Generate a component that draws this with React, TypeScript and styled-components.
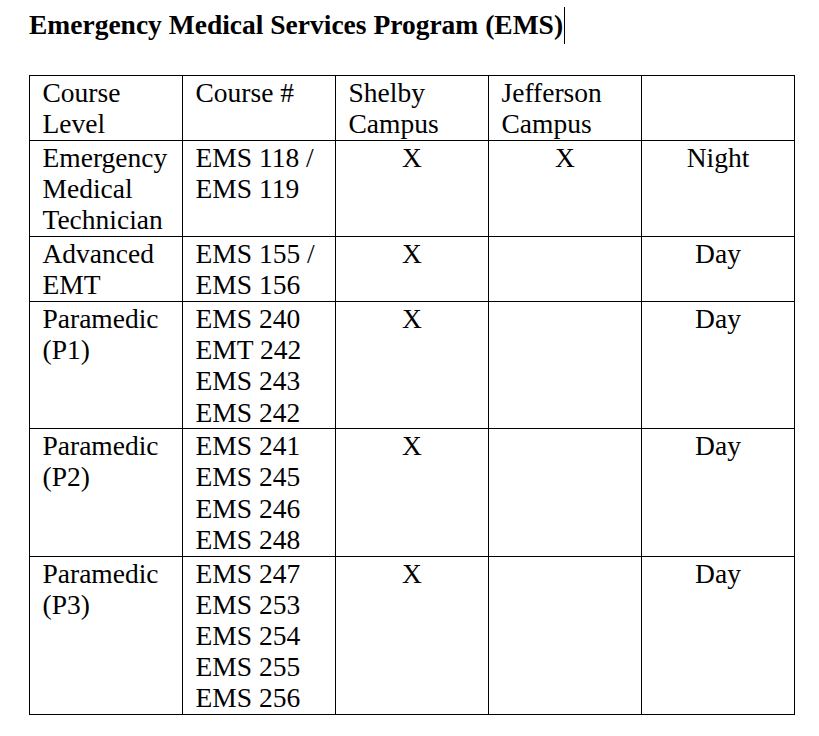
import React from "react";
import styled, { createGlobalStyle } from "styled-components";

const GlobalStyle = createGlobalStyle`
  html, body {
    margin: 0;
    padding: 0;
    background: #ffffff;
  }
  body {
    font-family: "Liberation Serif", "Times New Roman", serif;
    color: #000000;
  }
`;

const Page = styled.div`
  padding: 8.5px 0 0 29px;
  width: 819px;
  height: 736px;
  box-sizing: border-box;
  background: #ffffff;
`;

const Title = styled.h1`
  margin: 0;
  font-family: "Liberation Serif", "Times New Roman", serif;
  font-weight: bold;
  font-size: 27.5px;
  line-height: 31px;
  color: #000;
  white-space: nowrap;
`;

const Caret = styled.span`
  display: inline-block;
  width: 1px;
  height: 37px;
  margin: -3px 0 -4px 1px;
  background: #000;
  vertical-align: -6px;
`;

const Table = styled.table`
  margin-top: 35.5px;
  border-collapse: collapse;
  table-layout: fixed;
  width: 766px;
  font-family: "Liberation Serif", "Times New Roman", serif;
  font-size: 27.5px;
  line-height: 31.2px;
`;

const Col = styled.col`
  width: 153px;
`;

const Cell = styled.td<{ $center?: boolean }>`
  border: 1px solid #000;
  padding: 1px 4px 0.5px ${(p) => (p.$center ? "4px" : "12.5px")};
  vertical-align: top;
  text-align: ${(p) => (p.$center ? "center" : "left")};
  white-space: nowrap;
`;

const Line = styled.div`
  display: block;
`;

type Row = {
  level: string[];
  courses: string[];
  shelby: string;
  jefferson: string;
  time: string;
};

const rows: Row[] = [
  {
    level: ["Emergency", "Medical", "Technician"],
    courses: ["EMS 118 /", "EMS 119"],
    shelby: "X",
    jefferson: "X",
    time: "Night",
  },
  {
    level: ["Advanced", "EMT"],
    courses: ["EMS 155 /", "EMS 156"],
    shelby: "X",
    jefferson: "",
    time: "Day",
  },
  {
    level: ["Paramedic", "(P1)"],
    courses: ["EMS 240", "EMT 242", "EMS 243", "EMS 242"],
    shelby: "X",
    jefferson: "",
    time: "Day",
  },
  {
    level: ["Paramedic", "(P2)"],
    courses: ["EMS 241", "EMS 245", "EMS 246", "EMS 248"],
    shelby: "X",
    jefferson: "",
    time: "Day",
  },
  {
    level: ["Paramedic", "(P3)"],
    courses: ["EMS 247", "EMS 253", "EMS 254", "EMS 255", "EMS 256"],
    shelby: "X",
    jefferson: "",
    time: "Day",
  },
];

const Lines = ({ items }: { items: string[] }) => (
  <>
    {items.map((t, i) => (
      <Line key={i}>{t}</Line>
    ))}
  </>
);

export default function App() {
  return (
    <Page>
      <GlobalStyle />
      <Title>
        Emergency Medical Services Program (EMS)
        <Caret />
      </Title>
      <Table>
        <colgroup>
          <Col />
          <Col />
          <Col />
          <Col />
          <Col />
        </colgroup>
        <tbody>
          <tr>
            <Cell>
              <Lines items={["Course", "Level"]} />
            </Cell>
            <Cell>
              <Lines items={["Course #"]} />
            </Cell>
            <Cell>
              <Lines items={["Shelby", "Campus"]} />
            </Cell>
            <Cell>
              <Lines items={["Jefferson", "Campus"]} />
            </Cell>
            <Cell />
          </tr>
          {rows.map((r, i) => (
            <tr key={i}>
              <Cell>
                <Lines items={r.level} />
              </Cell>
              <Cell>
                <Lines items={r.courses} />
              </Cell>
              <Cell $center>{r.shelby}</Cell>
              <Cell $center>{r.jefferson}</Cell>
              <Cell $center>{r.time}</Cell>
            </tr>
          ))}
        </tbody>
      </Table>
    </Page>
  );
}
